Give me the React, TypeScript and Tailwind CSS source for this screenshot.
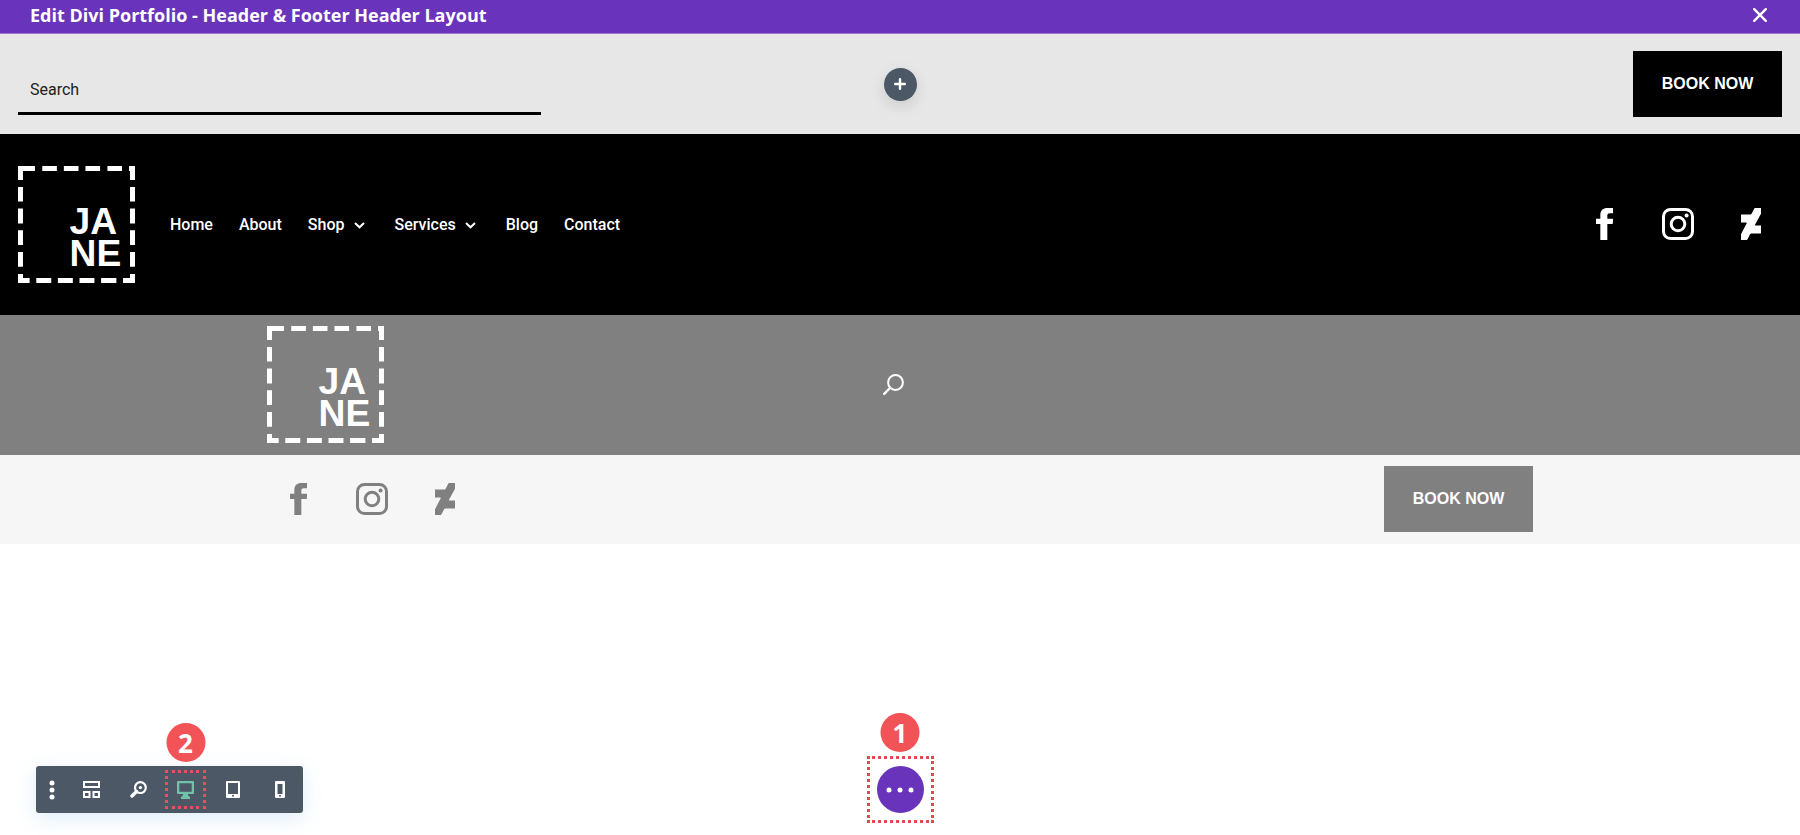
import type { ReactNode } from "react";
import { FaDeviantart } from "react-icons/fa";

type NavItem = {
  label: string;
  hasMenu?: boolean;
};

const NAV_ITEMS: NavItem[] = [
  { label: "Home" },
  { label: "About" },
  { label: "Shop", hasMenu: true },
  { label: "Services", hasMenu: true },
  { label: "Blog" },
  { label: "Contact" },
];

function Logo() {
  return (
    <svg viewBox="0 0 352 352" className="size-[117px] shrink-0" role="img" aria-label="Jane">
      <g stroke="#fff" strokeWidth="15" fill="none">
        <path d="M0 7.5H51M73 7.5H117M138 7.5H182M203 7.5H247M269 7.5H313M334 7.5H352" />
        <path d="M0 344.5H35M55 344.5H100M120 344.5H165M185 344.5H230M250 344.5H296M316 344.5H352" />
        <path d="M7.5 0V42M7.5 63V107M7.5 128V173M7.5 193V238M7.5 259V303M7.5 325V352" />
        <path d="M344.5 0V42M344.5 63V107M344.5 128V173M344.5 193V238M344.5 259V303M344.5 325V352" />
      </g>
      <g fill="#fff" fontSize="112" fontWeight="700" fontFamily="'Liberation Sans', sans-serif">
        <text x="155" y="205">JA</text>
        <text x="155" y="301">NE</text>
      </g>
    </svg>
  );
}

function FacebookIcon() {
  return (
    <svg viewBox="0 0 52 96" className="h-8" fill="currentColor" aria-hidden="true">
      <path d="M13 96V48H0V32H13V22C13 7 21 0 35 0H52V16H42C36 16 34 18 34 24V32H52L50 48H34V96Z" />
    </svg>
  );
}

function InstagramIcon() {
  return (
    <svg viewBox="0 0 32 32" className="size-8" fill="none" stroke="currentColor" strokeWidth="3" aria-hidden="true">
      <rect x="1.5" y="1.5" width="29" height="29" rx="7" />
      <circle cx="16" cy="16" r="6.8" />
      <circle cx="24.6" cy="7.4" r="2" fill="currentColor" stroke="none" />
    </svg>
  );
}

function SocialLinks() {
  const links: { name: string; icon: ReactNode }[] = [
    { name: "Facebook", icon: <FacebookIcon /> },
    { name: "Instagram", icon: <InstagramIcon /> },
    { name: "DeviantArt", icon: <FaDeviantart className="size-8" /> },
  ];

  return (
    <ul className="flex">
      {links.map(({ name, icon }) => (
        <li key={name}>
          <a href="#" aria-label={name} className="flex h-16 w-[73px] items-center justify-center">
            {icon}
          </a>
        </li>
      ))}
    </ul>
  );
}

function StepBadge({ children }: { children: ReactNode }) {
  return (
    <span className="absolute bottom-full left-1/2 mb-1 flex size-[39px] -translate-x-1/2 items-center justify-center rounded-full bg-[#f25356] font-['Open_Sans',sans-serif] text-[26px] leading-none font-bold text-white">
      {children}
    </span>
  );
}

function ToolButton({ label, children }: { label: string; children: ReactNode }) {
  return (
    <button type="button" aria-label={label} className="flex h-[47px] w-[47px] items-center justify-center">
      {children}
    </button>
  );
}

function BuilderToolbar() {
  return (
    <div className="flex w-[267px] items-center rounded-[3px] bg-[#4c5866] text-white shadow-[0_5px_20px_rgba(43,135,218,0.15)]">
      <button type="button" aria-label="More" className="flex h-[47px] w-8 items-center justify-center">
        <svg viewBox="0 0 6 20" className="h-5" fill="currentColor">
          <circle cx="3" cy="3" r="2.5" />
          <circle cx="3" cy="10" r="2.5" />
          <circle cx="3" cy="17" r="2.5" />
        </svg>
      </button>
      <ToolButton label="Wireframe view">
        <svg viewBox="0 0 17 17" className="size-[17px]" fill="none" stroke="currentColor" strokeWidth="2">
          <rect x="1" y="1" width="15" height="5" />
          <rect x="1" y="11" width="5.5" height="5" />
          <rect x="10.5" y="11" width="5.5" height="5" />
        </svg>
      </ToolButton>
      <ToolButton label="Zoom">
        <svg viewBox="0 0 17 17" className="size-[17px]" fill="none" stroke="currentColor">
          <circle cx="10.4" cy="6.6" r="5.4" strokeWidth="2.2" />
          <circle cx="10.4" cy="6.6" r="1.7" fill="currentColor" stroke="none" />
          <path d="M6.5 10.5L2 15" strokeWidth="3.4" strokeLinecap="round" />
        </svg>
      </ToolButton>
      <div className="relative flex h-[47px] w-[47px] justify-center py-1">
        <button
          type="button"
          aria-label="Desktop view"
          className="flex w-[41px] items-center justify-center border-3 border-dotted border-[#e8505b] text-[#70c3a9]"
        >
          <svg viewBox="0 0 17 18" className="h-[18px]" fill="currentColor">
            <path d="M1 0h15a1 1 0 0 1 1 1v11a1 1 0 0 1-1 1h-5v1.500l2 1.500v2H4v-2l2-1.500V13H1a1 1 0 0 1-1-1V1a1 1 0 0 1 1-1zM2.300 2.300v8.400h12.400V2.300z" />
          </svg>
        </button>
        <StepBadge>2</StepBadge>
      </div>
      <ToolButton label="Tablet view">
        <svg viewBox="0 0 14 17" className="h-[17px]">
          <rect width="14" height="17" rx="1" fill="currentColor" />
          <rect x="2" y="2" width="10" height="11" fill="#4c5866" />
          <circle cx="7" cy="14.800" r="1" fill="#4c5866" />
        </svg>
      </ToolButton>
      <ToolButton label="Phone view">
        <svg viewBox="0 0 10 17" className="h-[17px]">
          <rect width="10" height="17" rx="1" fill="currentColor" />
          <rect x="2.500" y="3" width="5" height="10" fill="#4c5866" />
          <circle cx="5" cy="14.800" r="1" fill="#4c5866" />
        </svg>
      </ToolButton>
    </div>
  );
}

export default function App() {
  return (
    <div className="flex min-h-screen flex-col bg-white font-['Roboto',sans-serif]">
      <header className="flex h-[34px] items-center justify-between border-b border-[#9a78d0] bg-[#6934bb] pr-8 pb-1 pl-[30px] text-white">
        <h1 className="font-['Open_Sans',sans-serif] text-lg leading-6 font-bold">
          Edit Divi Portfolio - Header &amp; Footer Header Layout
        </h1>
        <button type="button" aria-label="Close" className="p-px">
          <svg viewBox="0 0 14 14" className="size-[14px]" stroke="currentColor" strokeWidth="2.4" strokeLinecap="round">
            <path d="M1.200 1.200L12.800 12.800M12.800 1.200L1.200 12.800" />
          </svg>
        </button>
      </header>

      <main>
        <section className="grid h-[100px] grid-cols-[1fr_auto_1fr] items-center bg-[#e7e7e7] px-[18px]">
          <input
            type="search"
            aria-label="Search"
            placeholder="Search"
            className="mt-2 h-[54px] w-full max-w-[523px] border-b-[3px] border-black px-3 pt-1.5 text-base text-black outline-none placeholder:text-[#222]"
          />
          <button
            type="button"
            aria-label="Add section"
            className="flex size-[33px] items-center justify-center rounded-full bg-[#4c5866] text-white shadow-[0_5px_15px_rgba(0,0,0,0.12)]"
          >
            <svg viewBox="0 0 12 12" className="size-3" stroke="currentColor" strokeWidth="2.400" strokeLinecap="round">
              <path d="M6 1.200V10.800M1.200 6H10.800" />
            </svg>
          </button>
          <a
            href="#"
            className="flex h-[66px] w-[149px] items-center justify-center justify-self-end bg-black font-['Liberation_Sans',sans-serif] text-base font-bold text-white"
          >
            BOOK NOW
          </a>
        </section>

        <section className="flex h-[181px] items-center bg-black pr-[13px] pb-px pl-[18px] text-white">
          <Logo />
          <nav className="ml-[35px] pt-0.5">
            <ul className="flex gap-[26px] text-base font-medium">
              {NAV_ITEMS.map((item) => (
                <li key={item.label}>
                  <a href="#" className="flex items-center gap-[9px]">
                    {item.label}
                    {item.hasMenu ? (
                      <svg viewBox="0 0 11 7" className="mr-1 w-[11px]" fill="none" stroke="currentColor" strokeWidth="2">
                        <path d="M1 1L5.500 5.300L10 1" />
                      </svg>
                    ) : null}
                  </a>
                </li>
              ))}
            </ul>
          </nav>
          <div className="ml-auto">
            <SocialLinks />
          </div>
        </section>

        <section className="bg-[#808080] pb-0.5">
          <div className="mx-auto grid h-[138px] max-w-[1266px] grid-cols-2 items-center">
            <Logo />
            <button type="button" aria-label="Open search" className="-ml-[17px] w-[21px] text-white">
              <svg viewBox="0 0 21 21" className="size-[21px]" fill="none" stroke="currentColor" strokeWidth="2" strokeLinecap="round">
                <circle cx="12.500" cy="8.500" r="7.400" />
                <path d="M7 14L1.200 19.800" strokeWidth="2.400" />
              </svg>
            </button>
          </div>
        </section>

        <section className="bg-[#f6f6f6] pb-0.5">
          <div className="mx-auto flex h-[87px] max-w-[1266px] items-center justify-between">
            <div className="-ml-[5px] text-[#808080]">
              <SocialLinks />
            </div>
            <a
              href="#"
              className="flex h-[66px] w-[149px] items-center justify-center bg-[#808080] font-['Liberation_Sans',sans-serif] text-base font-bold text-white"
            >
              BOOK NOW
            </a>
          </div>
        </section>
      </main>

      <footer className="mt-auto grid grid-cols-[1fr_auto_1fr] items-center px-9 pt-16 pb-3">
        <BuilderToolbar />
        <div className="relative">
          <div className="border-3 border-dotted border-[#dd4b4f] p-[7px]">
            <button
              type="button"
              aria-label="Builder settings"
              className="flex size-[47px] items-center justify-center rounded-full bg-[#6934bb] text-white"
            >
              <svg viewBox="0 0 28 6" className="w-7" fill="currentColor">
                <circle cx="3" cy="3" r="2.500" />
                <circle cx="14" cy="3" r="2.500" />
                <circle cx="25" cy="3" r="2.500" />
              </svg>
            </button>
          </div>
          <StepBadge>1</StepBadge>
        </div>
      </footer>
    </div>
  );
}
